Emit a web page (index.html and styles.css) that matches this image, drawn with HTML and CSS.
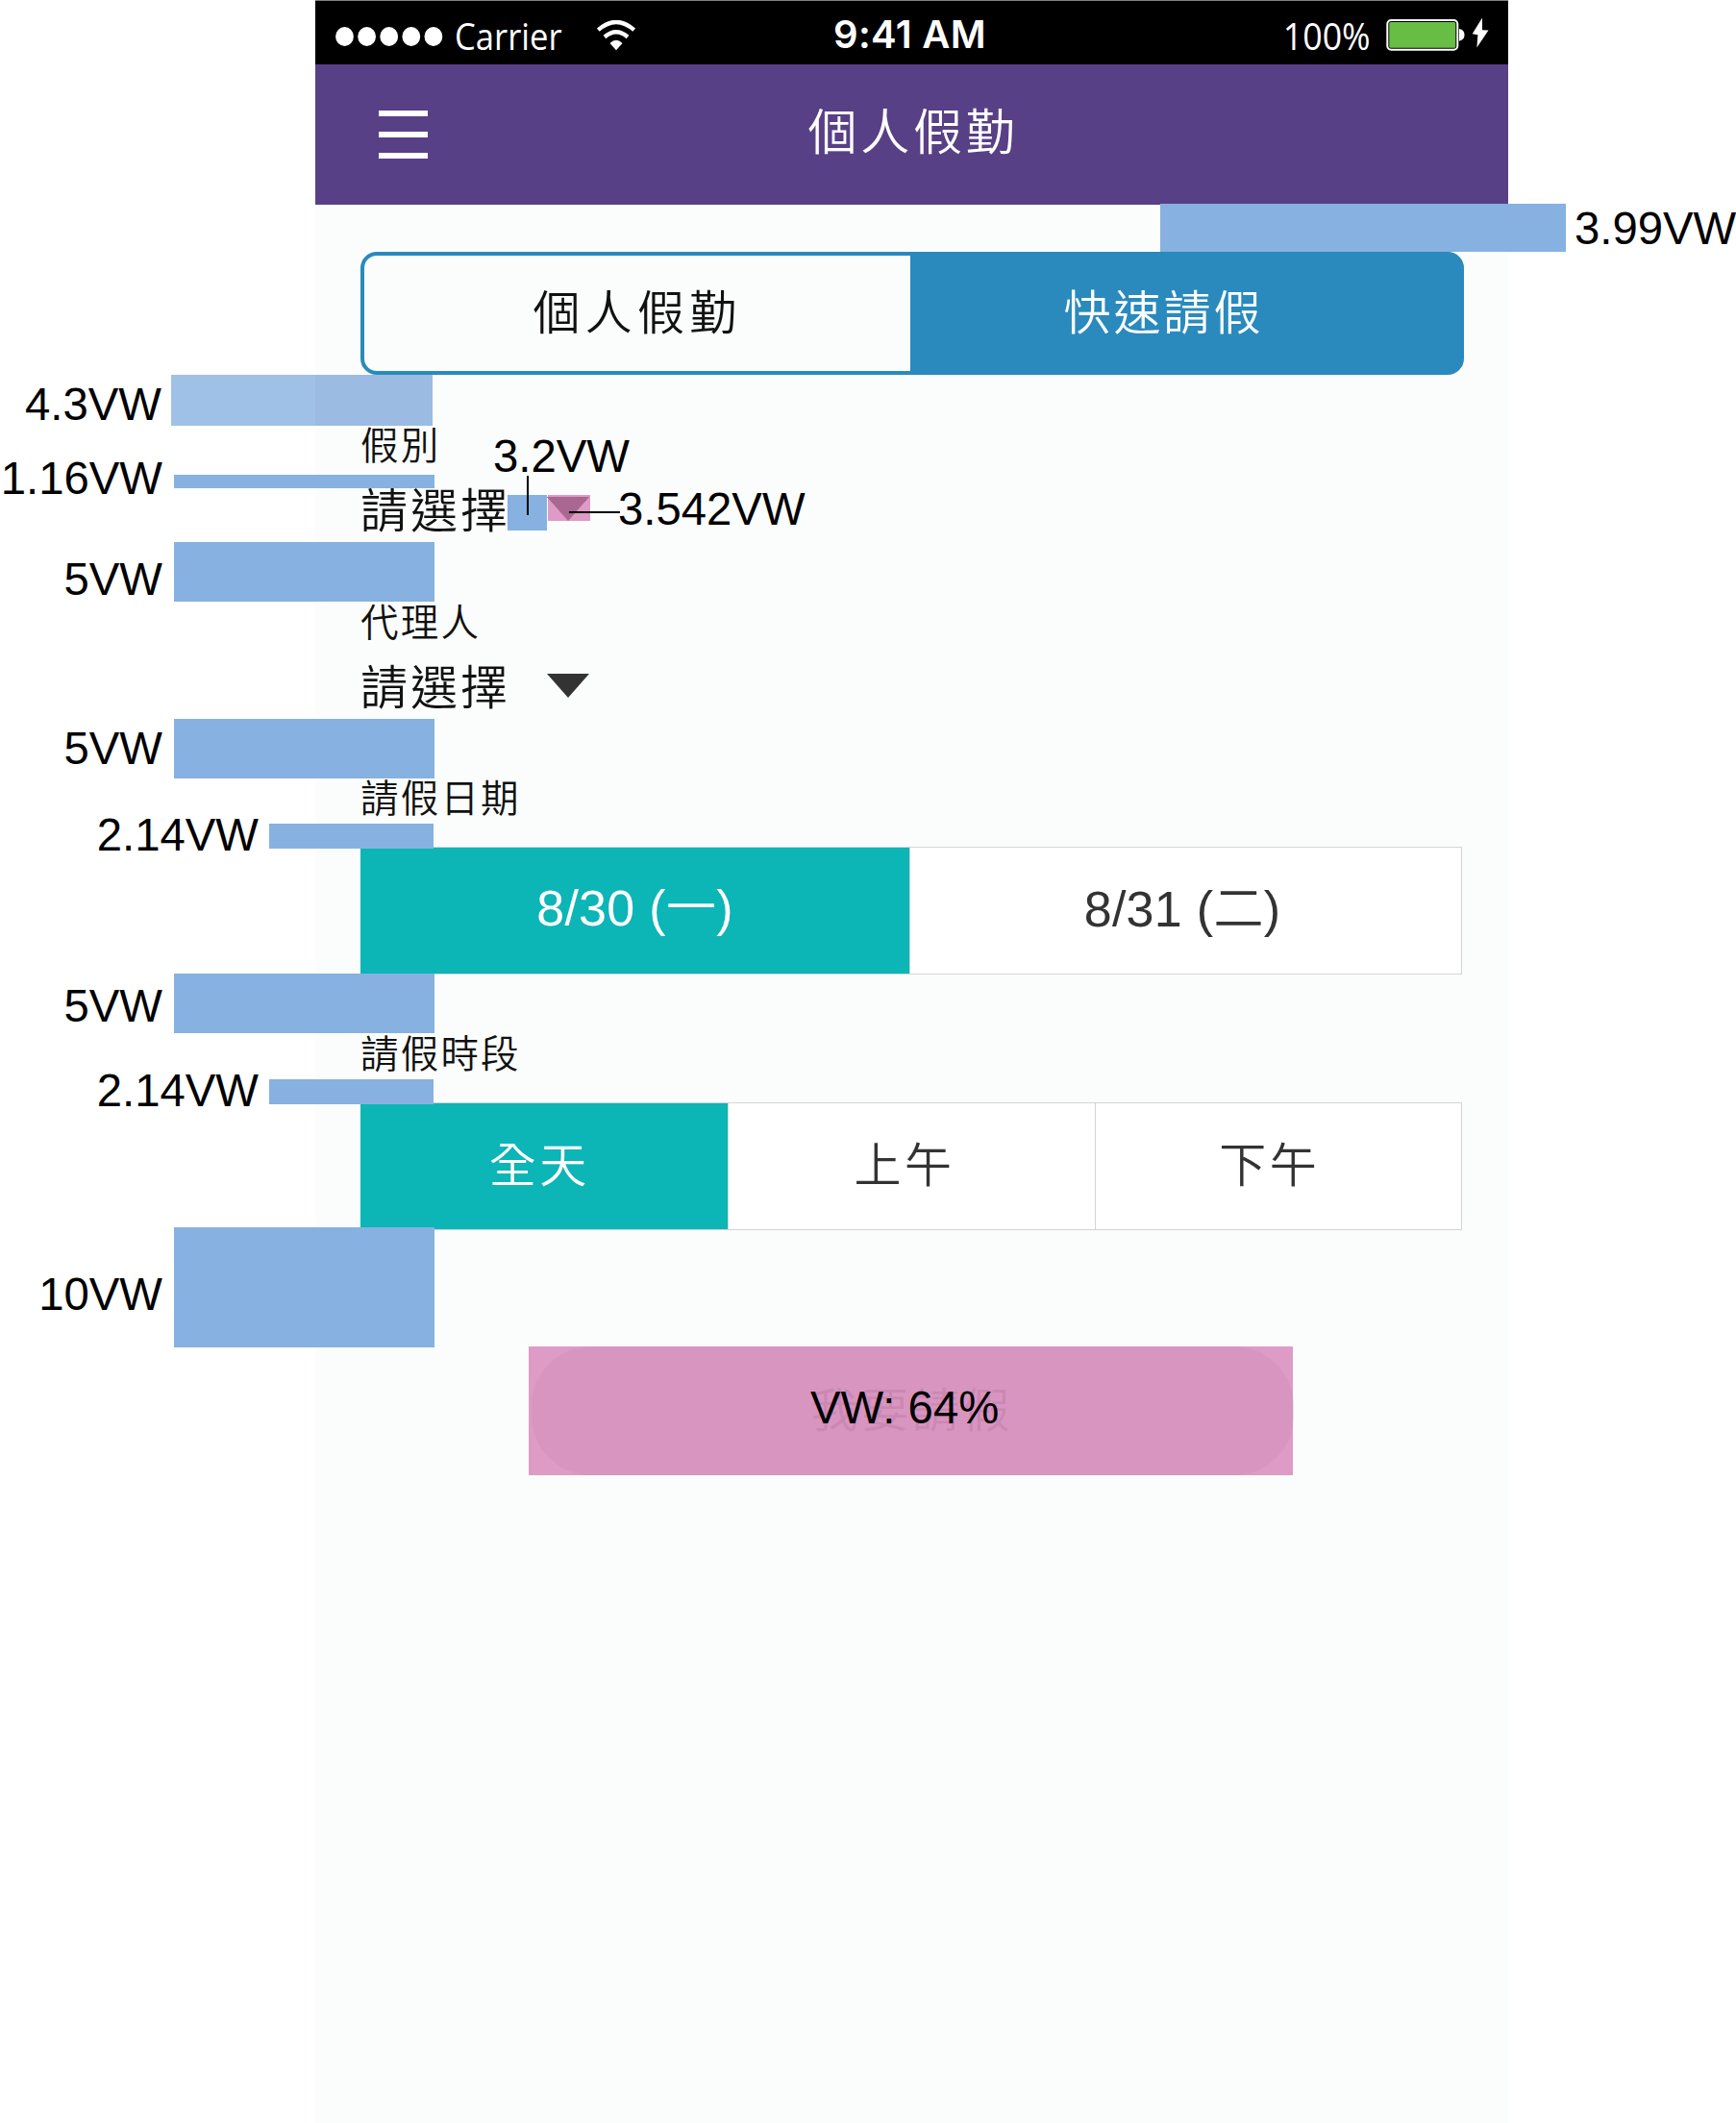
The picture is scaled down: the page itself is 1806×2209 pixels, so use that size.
FILE: index.html
```html
<!DOCTYPE html>
<html lang="zh-Hant">
<head>
<meta charset="utf-8">
<title>個人假勤</title>
<link rel="stylesheet" href="styles.css">
</head>
<body>
<main class="board">
  <section class="phone">
    <div class="status">
      <div class="status-left">
        <svg class="dots" width="112" height="20" viewBox="0 0 112 20" fill="#fff"><ellipse cx="9.5" cy="10" rx="9.4" ry="9.9"/><ellipse cx="32.6" cy="10" rx="9.4" ry="9.9"/><ellipse cx="55.7" cy="10" rx="9.4" ry="9.9"/><ellipse cx="78.8" cy="10" rx="9.4" ry="9.9"/><ellipse cx="101.9" cy="10" rx="9.4" ry="9.9"/></svg>
        <span class="carrier">Carrier</span>
        <svg class="wifi" width="40" height="32" viewBox="0 0 40 32"><path d="M1.3 10.2Q20-6.2 38.7 10.2" fill="none" stroke="#fff" stroke-width="4.4"/><path d="M8 17.5Q20 7.2 32 17.5" fill="none" stroke="#fff" stroke-width="4.3"/><path d="M13.500 24Q20 17.500 26.500 24L20 31.200Z" fill="#fff"/></svg>
      </div>
      <span class="clock">9:41 AM</span>
      <div class="status-right">
        <span class="percent">100%</span>
        <svg class="battery" width="108" height="36" viewBox="0 0 108 36"><rect x="1.300" y="4" width="73" height="30.800" rx="4" fill="#000" stroke="#fff" stroke-width="2"/><rect x="3.300" y="6" width="69" height="26.800" rx="1.500" fill="#68bd45"/><path d="M76 13Q81.500 14 81.500 19.300T76 25.700Z" fill="#fff"/><path d="M100 1.500L89.700 18.200L95.400 19.200L94.400 32.400L106.500 14.500L100 14.200Z" fill="#fff"/></svg>
      </div>
    </div>
    <header class="header">
      <div class="menu"><i></i><i></i><i></i></div>
      <h1 class="title">個人假勤</h1>
    </header>
    <div class="content">
      <nav class="tabs">
        <div class="tab">個人假勤</div>
        <div class="tab tab-active">快速請假</div>
      </nav>
      <div class="field">
        <div class="label">假別</div>
        <div class="select"><span>請選擇</span><svg width="44" height="25" viewBox="0 0 44 25"><path d="M0 0H44L22 25Z" fill="#333"/></svg></div>
      </div>
      <div class="field field-agent">
        <div class="label">代理人</div>
        <div class="select"><span>請選擇</span><svg width="44" height="25" viewBox="0 0 44 25"><path d="M0 0H44L22 25Z" fill="#333"/></svg></div>
      </div>
      <div class="field field-date">
        <div class="label">請假日期</div>
        <div class="options options-two">
          <div class="option option-on date">8/30 (一)</div>
          <div class="option date date-second">8/31 (二)</div>
        </div>
      </div>
      <div class="field field-time">
        <div class="label">請假時段</div>
        <div class="options">
          <div class="option option-on period">全天</div>
          <div class="option period">上午</div>
          <div class="option period">下午</div>
        </div>
      </div>
      <div class="submit">我要請假</div>
    </div>
  </section>

  <div class="bar bar-top"></div><div class="note note-top">3.99VW</div>
  <div class="bar bar-tabs"></div><div class="note note-left note-tabs">4.3VW</div>
  <div class="bar bar-label"></div><div class="note note-left note-label">1.16VW</div>
  <div class="bar bar-g1"></div><div class="note note-left note-g1">5VW</div>
  <div class="bar bar-g2"></div><div class="note note-left note-g2">5VW</div>
  <div class="bar bar-date"></div><div class="note note-left note-date">2.14VW</div>
  <div class="bar bar-g3"></div><div class="note note-left note-g3">5VW</div>
  <div class="bar bar-time"></div><div class="note note-left note-time">2.14VW</div>
  <div class="bar bar-g4"></div><div class="note note-left note-g4">10VW</div>
  <div class="bar bar-gap"></div><div class="note note-gap">3.2VW</div><div class="lead lead-gap"></div>
  <div class="shade shade-arrow"></div><div class="note note-arrow">3.542VW</div><div class="lead lead-arrow"></div>
  <div class="shade shade-submit"></div><div class="note note-submit">VW: 64%</div>
</main>
</body>
</html>
```
FILE: styles.css
```css
* { box-sizing: border-box; }
body {
  margin: 0;
  background: #fff;
  font-family: "Liberation Sans", "Noto Sans CJK TC", sans-serif;
  font-weight: 350;
}
.board { position: relative; width: 1806px; height: 2209px; overflow: hidden; }
.phone {
  display: flex;
  flex-direction: column;
  width: 1241px;
  height: 2209px;
  margin-left: 328px;
  background: #fbfdfc;
}

/* status bar */
.status {
  display: grid;
  grid-template-columns: 1fr auto 1fr;
  align-items: center;
  height: 67px;
  padding: 5px 19px 0 21px;
  background: #000;
  border-top: 1px solid #808080;
  color: #fff;
}
.status svg { display: block; flex: none; }
.status-left, .status-right { display: flex; align-items: center; }
.status-right { justify-content: flex-end; }
.dots { margin-top: 2px; }
.carrier {
  width: 114px;
  margin-left: 12px;
  font: 400 38px/50px "Open Sans", sans-serif;
  transform: scaleX(.91);
  transform-origin: left;
}
.wifi { margin-left: 34px; }
.clock { margin: 0 6px 2px 0; font: 600 40px/50px Inter, sans-serif; letter-spacing: .3px; }
.percent {
  font: 400 38px/50px "Open Sans", sans-serif;
  transform: scaleX(.94);
  transform-origin: right;
}
.battery { margin: -3px 0 0 16px; }

/* title bar */
.header {
  display: grid;
  grid-template-columns: 51px 1fr 51px;
  align-items: center;
  height: 146px;
  padding: 0 66px 2px;
  background: #584086;
  color: #fff;
}
.menu { display: flex; flex-direction: column; gap: 16px; padding-top: 2px; }
.menu i { height: 6px; background: #fff; }
.title {
  margin: 0;
  padding-left: 3px;
  font-size: 51px;
  font-weight: 350;
  line-height: 60px;
  letter-spacing: 3.8px;
  text-align: center;
}

.content { display: flex; flex-direction: column; padding: 49px 46px 0 47px; }

/* tabs */
.tabs {
  display: flex;
  height: 128px;
  border: 4px solid #2a8abd;
  border-radius: 17px;
  background: #2a8abd;
  font-size: 49px;
  line-height: 60px;
}
.tab {
  display: flex;
  align-items: center;
  justify-content: center;
  width: 568px;
  border-radius: 13px 0 0 13px;
  background: #fbfdfc;
  color: #111;
  letter-spacing: 5.2px;
}
.tab-active {
  flex: 1;
  padding-right: 45px;
  border-radius: 0;
  background: none;
  color: #fff;
  letter-spacing: 3px;
}

/* fields */
.field { display: flex; flex-direction: column; margin-top: 52px; color: #111; }
.field-agent { margin-top: 69px; }
.field-date { margin-top: 68px; }
.field-time { margin-top: 61px; }
.label { font-size: 39.5px; line-height: 44px; letter-spacing: 2.2px; }
.select {
  display: flex;
  align-items: center;
  gap: 38px;
  margin-top: 21px;
  font-size: 49px;
  line-height: 50px;
  letter-spacing: 3px;
}
.select svg { margin-bottom: 5px; }
.options {
  display: grid;
  grid-auto-flow: column;
  grid-auto-columns: 1fr;
  width: 1146px;
  height: 133px;
  margin-top: 28px;
  border: 1px solid #d3d5d5;
  background: #fff;
  color: #333;
  line-height: 60px;
}
.options-two { grid-template-columns: 570px 1fr; }
.option {
  display: flex;
  align-items: center;
  justify-content: center;
  border-left: 1px solid #d3d5d5;
}
.option:first-child { margin-left: -1px; border-left: 0; }
.option-on { background: #0cb5b6; color: #fff; }
.date { padding-bottom: 6px; font-size: 52px; letter-spacing: .3px; }
.date-second { padding: 0 7px 3px 0; }
.period { padding: 0 15px 2px 0; font-size: 49px; letter-spacing: 3.5px; }
.period:first-child { padding-right: 10px; }
.period:last-child { padding-right: 18px; }
.submit {
  align-self: center;
  width: 793px;
  height: 134px;
  margin-top: 121px;
  border-radius: 62px;
  background: #e3e6e4;
  color: #b4b4b4;
  font-size: 49px;
  line-height: 134px;
  letter-spacing: 3.6px;
  text-align: center;
}

/* spacing annotations laid over the screen */
.bar, .shade, .note, .lead { position: absolute; }
.bar { left: 181px; width: 271px; background: #87b1e0; }
.bar-top { left: 1207px; top: 212px; width: 422px; height: 50px; }
.bar-tabs {
  left: 178px;
  top: 390px;
  width: 272px;
  height: 53px;
  background: linear-gradient(90deg, #a0c1e7 150px, #9cbbe3 150px);
}
.bar-label { top: 494px; height: 14px; }
.bar-g1 { top: 564px; height: 62px; }
.bar-g2 { top: 748px; height: 62px; }
.bar-date { left: 280px; top: 857px; width: 171px; height: 26px; }
.bar-g3 { top: 1013px; height: 62px; }
.bar-time { left: 280px; top: 1123px; width: 171px; height: 26px; }
.bar-g4 { top: 1277px; height: 125px; }
.bar-gap { left: 528px; top: 515px; width: 41px; height: 37px; }
.shade { background: rgba(211, 121, 178, .745); }
.shade-arrow { left: 570px; top: 515px; width: 44px; height: 27px; }
.shade-submit { left: 550px; top: 1401px; width: 795px; height: 134px; }
.note { color: #000; font-size: 47.3px; line-height: 48px; white-space: nowrap; }
.note-left { right: 1637px; }
.note-top { left: 1638px; top: 214px; }
.note-tabs { top: 397px; right: 1638px; }
.note-label { top: 474px; }
.note-g1 { top: 579px; }
.note-g2 { top: 755px; }
.note-date { top: 845px; right: 1537px; }
.note-g3 { top: 1023px; }
.note-time { top: 1111px; right: 1537px; }
.note-g4 { top: 1323px; }
.note-gap { left: 513px; top: 451px; }
.note-arrow { left: 643px; top: 506px; }
.note-submit { left: 843px; top: 1441px; }
.lead { background: #000; }
.lead-gap { left: 548px; top: 495px; width: 2px; height: 41px; }
.lead-arrow { left: 592px; top: 532px; width: 53px; height: 2px; }
```
